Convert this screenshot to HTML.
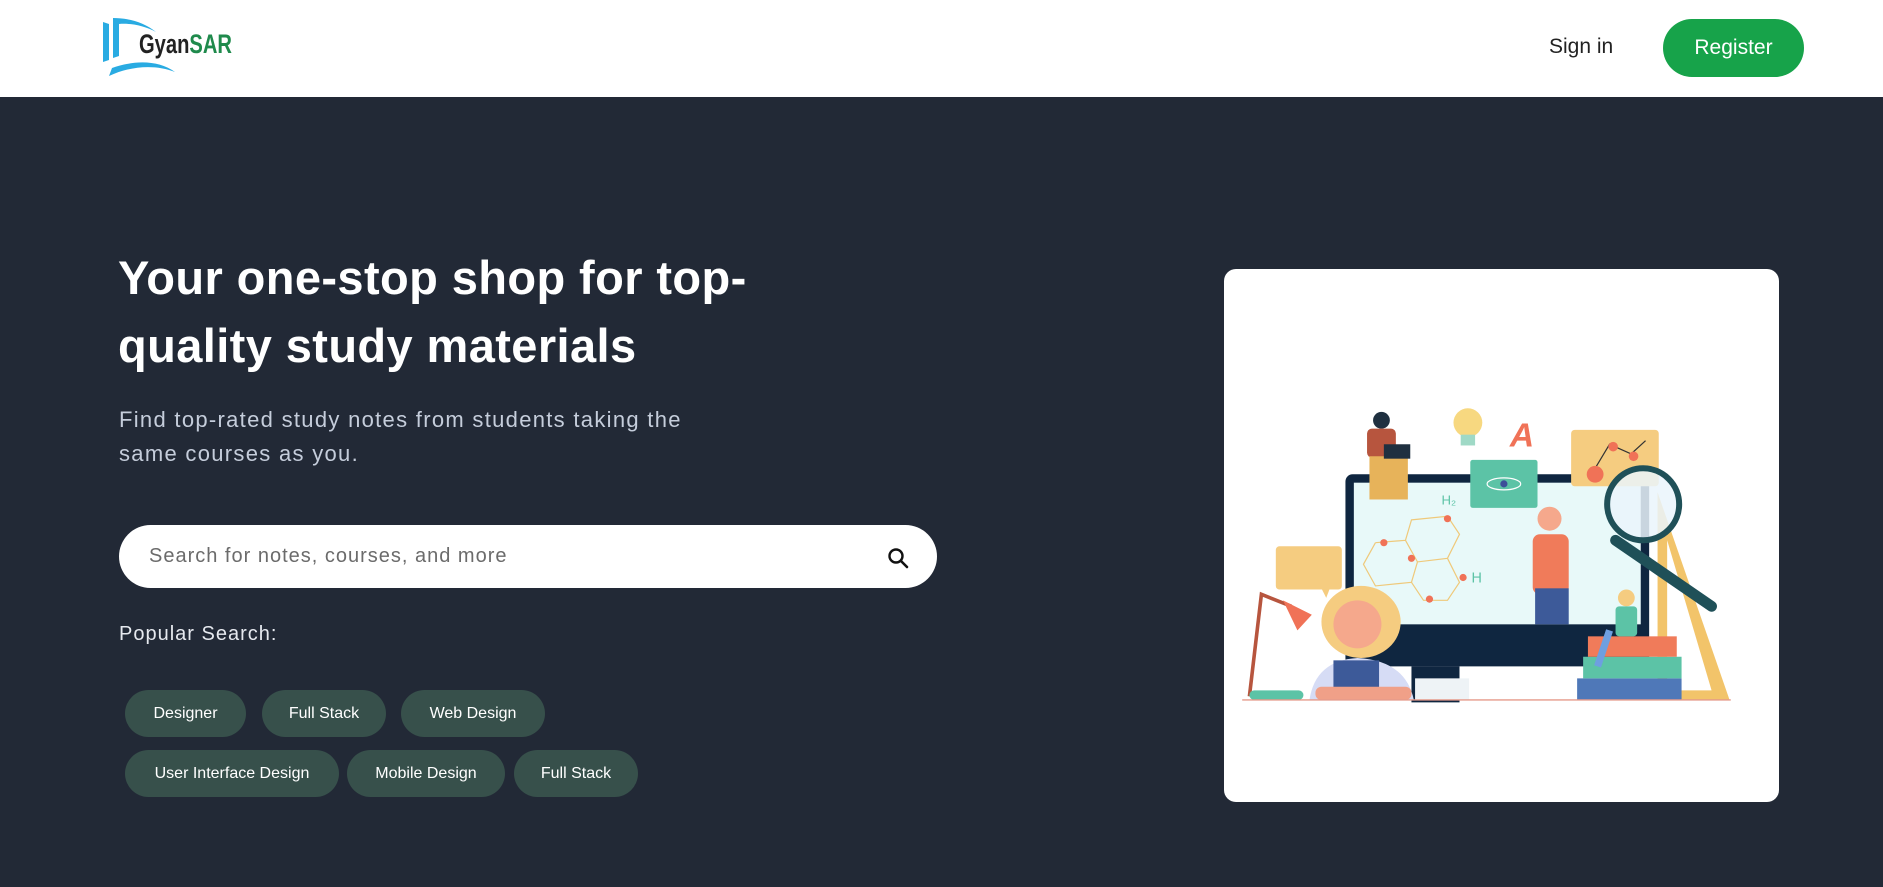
<!DOCTYPE html>
<html><head><meta charset="utf-8"><style>
*{margin:0;padding:0;box-sizing:border-box}
body{width:1883px;height:887px;overflow:hidden;background:#222936;font-family:"Liberation Sans",sans-serif;position:relative}
.nav{position:absolute;left:0;top:0;width:1883px;height:97px;background:#fff}
.signin{position:absolute;left:1549px;top:35px;font-size:21px;color:#222}
.reg{position:absolute;left:1663px;top:19px;width:141px;height:58px;border-radius:29px;background:#17a34a;color:#fff;font-size:21px;text-align:center;line-height:58px}
h1{position:absolute;left:118px;top:244px;font-size:47px;line-height:68px;color:#fff;font-weight:bold;letter-spacing:0.4px}
.p{position:absolute;left:119px;top:403px;font-size:22px;line-height:34px;color:#c5cddb;letter-spacing:1.3px}
.search{position:absolute;left:119px;top:525px;width:818px;height:63px;border-radius:32px;background:#fff}
.search span{position:absolute;left:30px;top:20px;font-size:20px;color:#6b6b6b;letter-spacing:1px}
.pop{position:absolute;left:119px;top:623px;font-size:20px;color:#e6e9ef;letter-spacing:1px}
.chip{position:absolute;height:47px;border-radius:24px;background:#37504b;color:#fff;font-size:16px;line-height:47px;text-align:center}
.card{position:absolute;left:1224px;top:269px;width:555px;height:533px;border-radius:12px;background:#fff;overflow:hidden}
</style></head><body>
<div class="nav">
<svg style="position:absolute;left:100px;top:16px" width="140" height="64" viewBox="0 0 140 64">
<path d="M3 6 L3 46 L9 44 L9 8 Z" fill="#29abe2"/>
<path d="M13 2 L13 42 L19 40 L19 8 C32 7 45 10 56 16 C44 6 28 2 13 2Z" fill="#29abe2"/>
<path d="M9 60 C30 50 55 48 75 56 C58 44 35 44 12 52 Z" fill="#29abe2"/>
<text x="39" y="37" font-family="Liberation Sans" font-weight="bold" font-size="27" textLength="93" lengthAdjust="spacingAndGlyphs" fill="#222">Gyan<tspan fill="#1f8a4c">SAR</tspan></text>
</svg>
<div class="signin">Sign in</div>
<div class="reg">Register</div>
</div>
<h1>Your one-stop shop for top-<br>quality study materials</h1>
<div class="p">Find top-rated study notes from students taking the<br>same courses as you.</div>
<div class="search"><span>Search for notes, courses, and more</span>
<svg style="position:absolute;left:768px;top:22px" width="22" height="22" viewBox="0 0 22 22"><circle cx="9" cy="9" r="6.5" fill="none" stroke="#111" stroke-width="2.4"/><path d="M14 14 L20 20" stroke="#111" stroke-width="2.6" stroke-linecap="round"/></svg></div>
<div class="pop">Popular Search:</div>
<div class="chip" style="left:125px;top:690px;width:121px">Designer</div>
<div class="chip" style="left:262px;top:690px;width:124px">Full Stack</div>
<div class="chip" style="left:401px;top:690px;width:144px">Web Design</div>
<div class="chip" style="left:125px;top:750px;width:214px">User Interface Design</div>
<div class="chip" style="left:347px;top:750px;width:158px">Mobile Design</div>
<div class="chip" style="left:514px;top:750px;width:124px">Full Stack</div>
<div class="card">
<svg width="555" height="533" viewBox="1019 224 462 444">
<polygon points="1380,410 1440,583 1380,583" fill="#f2c46a"/>
<polygon points="1388,450 1425,575 1388,575" fill="#fff"/>
<rect x="1120" y="395" width="253" height="160" rx="6" fill="#0f2640"/>
<rect x="1127" y="402" width="239" height="118" fill="#e8f9f9"/>
<rect x="1175" y="555" width="40" height="30" fill="#0f2640"/>
<rect x="1062" y="455" width="55" height="36" rx="3" fill="#f5cc80"/>
<polygon points="1100,490 1107,490 1104,498" fill="#f5cc80"/>
<g stroke="#efc97a" fill="none" stroke-width="1"><path d="M1175 433 L1205 430 L1215 445 L1205 465 L1180 468 L1170 450Z M1205 465 L1215 485 L1205 500 L1185 500 L1175 485 L1180 468 M1145 452 L1170 450 M1145 452 L1135 470 L1145 488 L1175 485"/></g>
<circle cx="1205" cy="432" r="3" fill="#f07257"/><circle cx="1190" cy="499" r="3" fill="#f07257"/><circle cx="1218" cy="481" r="3" fill="#f07257"/><circle cx="1175" cy="465" r="3" fill="#f07257"/><circle cx="1152" cy="452" r="3" fill="#f07257"/>
<text x="1200" y="420" font-size="11" fill="#5cc3a6" font-family="Liberation Sans">H₂</text><text x="1225" y="485" font-size="12" fill="#5cc3a6" font-family="Liberation Sans">H</text>
<rect x="1224" y="383" width="56" height="40" rx="2" fill="#5cc3a6"/>
<ellipse cx="1252" cy="403" rx="14" ry="5" fill="none" stroke="#fff" stroke-width="1"/><circle cx="1252" cy="403" r="3" fill="#3d4f99"/>
<rect x="1308" y="358" width="73" height="47" rx="3" fill="#f5cc80"/>
<path d="M1325 395 L1340 370 L1358 378 L1370 367" stroke="#333" stroke-width="1" fill="none"/><circle cx="1328" cy="395" r="7" fill="#f07257"/><circle cx="1343" cy="372" r="4" fill="#f07257"/><circle cx="1360" cy="380" r="4" fill="#f07257"/>
<circle cx="1222" cy="352" r="12" fill="#f7d880"/><rect x="1216" y="362" width="12" height="9" fill="#9fd9c6"/>
<text x="1257" y="372" font-size="28" font-weight="bold" font-style="italic" fill="#f07257" font-family="Liberation Sans">A</text>
<circle cx="1150" cy="350" r="7" fill="#1f3040"/><rect x="1138" y="357" width="24" height="24" rx="4" fill="#b7553e"/><rect x="1140" y="380" width="32" height="36" fill="#e7b35a"/><rect x="1152" y="370" width="22" height="12" fill="#1f3040"/>
<path d="M1313 583 L1400 583 L1400 565 L1313 565Z" fill="#4f78b8"/><rect x="1318" y="547" width="82" height="18" fill="#5cc3a6"/><rect x="1322" y="530" width="74" height="17" fill="#f07b5a"/>
<path d="M1345 450 L1425 505" stroke="#1f5058" stroke-width="9" stroke-linecap="round"/>
<circle cx="1368" cy="420" r="30" fill="#eaf4fb" fill-opacity="0.85" stroke="#1f5058" stroke-width="5"/>
<circle cx="1290" cy="432" r="10" fill="#f5a88c"/><rect x="1276" y="445" width="30" height="50" rx="6" fill="#f07b5a"/><rect x="1278" y="490" width="28" height="30" fill="#3d5a99"/>
<circle cx="1354" cy="498" r="7" fill="#f5cc80"/><rect x="1345" y="505" width="18" height="25" rx="3" fill="#5cc3a6"/><path d="M1340 525 L1330 555" stroke="#6e9fe0" stroke-width="6"/>
<path d="M1040 580 L1050 495 L1075 505" stroke="#b7553e" stroke-width="3" fill="none"/><path d="M1068 500 L1092 512 L1080 525Z" fill="#f07257"/><rect x="1040" y="575" width="45" height="8" rx="4" fill="#5cc3a6"/>
<ellipse cx="1133" cy="518" rx="33" ry="30" fill="#f5cc80"/><circle cx="1130" cy="520" r="20" fill="#f5a88c"/>
<path d="M1090 583 Q1095 550 1130 548 Q1170 550 1177 583Z" fill="#d6dcf5"/><rect x="1110" y="550" width="38" height="33" fill="#3d5a99"/><rect x="1095" y="572" width="80" height="11" rx="5" fill="#f0a088"/>
<rect x="1178" y="565" width="45" height="18" fill="#eef3f6"/>
<line x1="1034" y1="583" x2="1441" y2="583" stroke="#e59a8a" stroke-width="1.2"/>
</svg>
</div>
</body></html>
